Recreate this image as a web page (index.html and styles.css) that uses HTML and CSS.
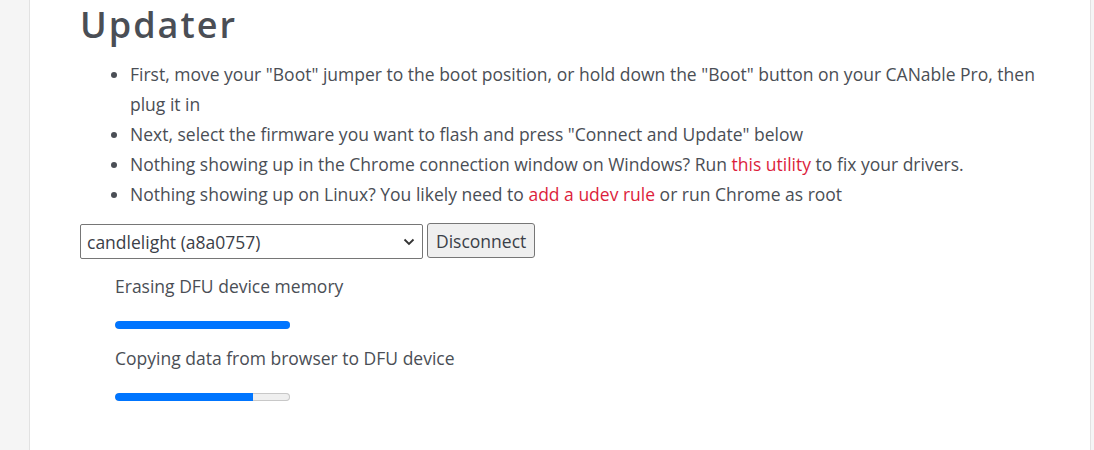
FILE: index.html
```html
<!DOCTYPE html>
<html>
<head>
<meta charset="utf-8">
<link rel="stylesheet" href="styles.css">
</head>
<body>
<main class="page">
  <h1 class="title">Updater</h1>
  <ul class="steps">
    <li>First, move your "Boot" jumper to the boot position, or hold down the "Boot" button on your CANable Pro, then plug it in</li>
    <li>Next, select the firmware you want to flash and press "Connect and Update" below</li>
    <li>Nothing showing up in the Chrome connection window on Windows? Run <a class="link" href="#">this utility</a> to fix your drivers.</li>
    <li>Nothing showing up on Linux? You likely need to <a class="link" href="#">add a udev rule</a> or run Chrome as root</li>
  </ul>
  <div class="controls">
    <div class="select">
      <span class="select-text">candlelight (a8a0757)</span>
      <svg class="chevron" width="12" height="8" viewBox="0 0 12 8"><path d="M1.5 1.5 L6 6 L10.5 1.5" fill="none" stroke="#333" stroke-width="1.8"/></svg>
    </div>
    <button class="btn">Disconnect</button>
  </div>
  <div class="status">
    <p class="status-text">Erasing DFU device memory</p>
    <div class="bar"><div class="fill" style="width:100%"></div></div>
    <p class="status-text">Copying data from browser to DFU device</p>
    <div class="bar"><div class="fill" style="width:79%"></div></div>
  </div>
</main>
</body>
</html>
```
FILE: styles.css
```css
html, body {
  margin: 0;
  padding: 0;
}
body {
  background: #f5f5f5;
  font-family: "Open Sans", "Noto Sans", sans-serif;
  color: #4a4e55;
  height: 450px;
  overflow: hidden;
}
.page {
  box-sizing: border-box;
  margin-left: 29px;
  width: 1062px;
  min-height: 450px;
  background: #ffffff;
  border-left: 1px solid #e2e2e2;
  border-right: 1px solid #e2e2e2;
  padding: 2px 50px 0 50px;
}
.title {
  margin: 0 0 11px 0;
  font-size: 36px;
  line-height: 46px;
  font-weight: 600;
  letter-spacing: 2px;
  color: #4a4e55;
}
.steps {
  margin: 0;
  padding-left: 50px;
  font-size: 17.5px;
  line-height: 30px;
}
.link {
  color: #dc1e3c;
  text-decoration: none;
}
.controls {
  display: flex;
  align-items: flex-start;
  gap: 4px;
  margin-top: 15px;
}
.select {
  box-sizing: border-box;
  width: 343px;
  height: 35px;
  border: 1px solid #767676;
  border-radius: 2px;
  display: flex;
  align-items: center;
  justify-content: space-between;
  padding: 0 6px 0 6px;
  font-size: 17.5px;
  color: #3b4048;
}
.chevron {
  margin-right: 1px;
}
.btn {
  box-sizing: border-box;
  height: 35px;
  margin-top: -1px;
  padding: 0 8px;
  font-family: "Open Sans", "Noto Sans", sans-serif;
  font-size: 17.5px;
  color: #3b4048;
  background: #efefef;
  border: 1px solid #767676;
  border-radius: 3px;
}
.status {
  padding: 15px 0 0 35px;
}
.status-text {
  margin: 0;
  font-size: 17.5px;
  line-height: 24px;
}
.bar {
  width: 175px;
  height: 8px;
  margin: 23px 0 17px 0;
  background: #efefef;
  box-shadow: inset 0 0 0 1px #c8c8c8;
  border-radius: 4px;
  overflow: hidden;
}
.fill {
  height: 100%;
  background: #0075ff;
  border-radius: 4px 0 0 4px;
}
```
